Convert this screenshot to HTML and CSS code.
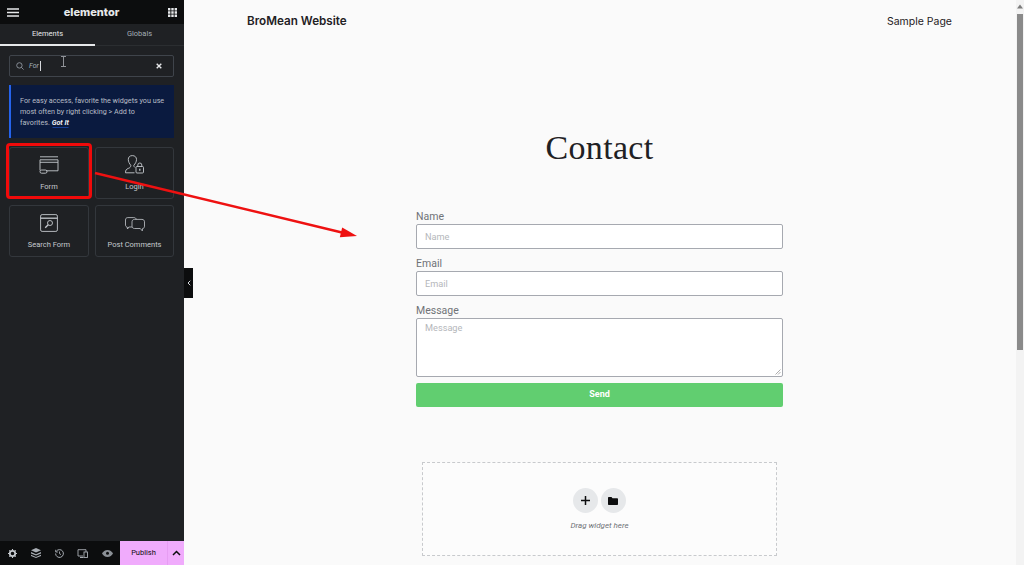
FILE: index.html
```html
<!DOCTYPE html>
<html lang="en">
<head>
    <meta charset="UTF-8">
    <title>Contact - Elementor</title>
    <link rel="stylesheet" href="styles.css">
</head>
<body>
    <div class="editor">
        <aside class="panel">
            <div class="panel-top">
                <svg class="icon-menu" width="12" height="9" viewBox="0 0 12 9"><path d="M0 1h12M0 4.500h12M0 8h12" stroke="#e6e8ea" stroke-width="1.600"/></svg>
                <span class="brand">elementor</span>
                <svg width="9" height="9" viewBox="0 0 9 9" fill="#e6e8ea"><path d="M0 0h2.400v2.400H0zM3.300 0h2.400v2.400H3.300zM6.600 0H9v2.400H6.600zM0 3.300h2.400v2.400H0zM3.300 3.300h2.400v2.400H3.300zM6.600 3.300H9v2.400H6.600zM0 6.600h2.400V9H0zM3.300 6.600h2.400V9H3.300zM6.600 6.600H9V9H6.600z"/></svg>
            </div>
            <div class="tabs">
                <div class="tab active">Elements</div>
                <div class="tab">Globals</div>
            </div>
            <div class="panel-body">
                <div class="search">
                    <svg width="8" height="8" viewBox="0 0 8 8" fill="none" stroke="#9da5ae"><circle cx="3.400" cy="3.400" r="2.700" stroke-width=".8"/><path d="M5.400 5.400L7.600 7.600" stroke-width=".8"/></svg>
                    <div class="search-input"><span class="search-text">For</span></div>
                    <svg class="search-clear" width="6" height="6" viewBox="0 0 6 6"><path d="M.7.7l4.600 4.600M5.300.7L.7 5.300" stroke="#e6e8ea" stroke-width="1.400"/></svg>
                </div>
                <div class="notice">For easy access, favorite the widgets you use most often by right clicking &gt; Add to favorites. <b class="got-it">Got It</b></div>
                <div class="widgets">
                    <div class="widget">
                        <svg width="20" height="18" viewBox="0 0 20 18" fill="none" stroke="#c5c9ce" stroke-width=".9"><path d="M1 .8h18M1 3.800h18v11H7M1 3.800v10.500"/><rect x="1" y="14" width="7" height="3.200" rx="1.600"/><path d="M1 6.300h18"/></svg>
                        <span>Form</span>
                    </div>
                    <div class="widget">
                        <svg width="19" height="19" viewBox="0 0 19 19" fill="none" stroke="#c5c9ce" stroke-width=".9"><path d="M10 12.500c-.8-.6-1.200-1.200-1.200-2.200 1.500-1.700 2.700-3.500 2.700-5.800S10 .6 7.300.6 3.300 2.300 3.300 4.500 4.500 8.800 5.800 10.300c0 1.700-.8 2.400-2.500 3.100C1.300 14.200.5 15 .5 17.800h9"/><rect x="11" y="11.500" width="7.500" height="6.500" rx="1"/><path d="M12.800 11.500V10a2 2 0 0 1 4 0v1.500"/><path d="M14.800 13.800v2" stroke-width="1.300"/></svg>
                        <span>Login</span>
                    </div>
                    <div class="widget">
                        <svg width="18" height="18" viewBox="0 0 18 18" fill="none" stroke="#c5c9ce" stroke-width=".9"><rect x=".6" y=".6" width="16.800" height="16.800" rx="1.500"/><path d="M.6 4.200h16.800" stroke-width="1.300"/><circle cx="10" cy="9" r="2.500"/><path d="M8.200 10.800l-3 3" stroke-width="1.300"/></svg>
                        <span>Search Form</span>
                    </div>
                    <div class="widget">
                        <svg width="20" height="15" viewBox="0 0 20 15" fill="none" stroke="#c5c9ce" stroke-width=".8"><path d="M7 10H3.800L2.500 12l-.3-2C1 9.800.5 9 .5 8V3C.5 1.500 1.300.6 2.800.6h6c1.300 0 2.200.6 2.500 1.700"/><path d="M9.500 2.400h7.500c1.500 0 2.500 1 2.500 2.400v4.400c0 1.300-.6 2.200-1.900 2.300l-.3 2.400-2-2.400H9.500c-1.500 0-2.500-1-2.500-2.400V4.800c0-1.400 1-2.400 2.500-2.400z"/></svg>
                        <span>Post Comments</span>
                    </div>
                </div>
            </div>
            <div class="panel-bottom">
                <div class="tools">
                    <svg width="9" height="9" viewBox="0 0 9 9"><circle cx="4.500" cy="4.500" r="2.700" fill="none" stroke="#c5c9ce" stroke-width="1.800"/><path d="M4.500 0v9M0 4.500h9M1.300 1.300l6.400 6.400M7.700 1.300L1.300 7.700" stroke="#c5c9ce" stroke-width="1.100" stroke-dasharray="1.500 6"/></svg>
                    <svg width="10" height="10" viewBox="0 0 10 10" fill="#a9aeb4"><path d="M5 0l5 2.200-5 2.200L0 2.200zM0 4l5 2.200L10 4v1.400L5 7.600 0 5.400zM0 6.800L5 9l5-2.200V8L5 10 0 8z"/></svg>
                    <svg width="9" height="9" viewBox="0 0 9 9" fill="none" stroke="#a9aeb4"><path d="M1.300 2.300A3.900 3.900 0 1 1 .6 4.500" stroke-width="1"/><path d="M.7 .8v2.200h2.200" stroke-width=".9"/><path d="M4.500 2.500v2.200l1.500.9" stroke-width=".9"/></svg>
                    <svg width="11" height="9" viewBox="0 0 11 9" fill="none" stroke="#a9aeb4" stroke-width=".9"><path d="M6 7H1V.7h8V3"/><rect x="7" y="3" width="3.500" height="5.500"/><path d="M3 8.500h3.500" stroke-width="1.200"/></svg>
                    <svg width="11" height="7" viewBox="0 0 11 7" fill="#8b9096"><path d="M5.500 0C8 0 10 1.800 11 3.500 10 5.200 8 7 5.500 7S1 5.200 0 3.500C1 1.800 3 0 5.500 0z"/><circle cx="5.500" cy="3.300" r="1.500" fill="#0c0d0e"/></svg>
                </div>
                <div class="publish">Publish</div>
                <div class="publish-more">
                    <svg width="9" height="6" viewBox="0 0 9 6" fill="none"><path d="M1 5l3.500-3.500L8 5" stroke="#0c0d0e" stroke-width="1.500"/></svg>
                </div>
            </div>
            <div class="collapse">
                <svg width="4" height="6" viewBox="0 0 4 6" fill="none"><path d="M3.300.7L1 3l2.300 2.300" stroke="#d5d8dc" stroke-width="1"/></svg>
            </div>
        </aside>

        <main class="page">
            <header class="site-header">
                <div class="site-title">BroMean Website</div>
                <nav class="site-nav">Sample Page</nav>
            </header>
            <h1 class="page-title">Contact</h1>
            <form class="contact-form">
                <label>Name</label>
                <div class="field">Name</div>
                <label>Email</label>
                <div class="field">Email</div>
                <label>Message</label>
                <div class="field field-area">
                    Message
                    <svg class="grip" width="6" height="6" viewBox="0 0 6 6"><path d="M.5 5.500l5-5M3 5.500l2.500-2.500" stroke="#8a8a8a" stroke-width=".7"/></svg>
                </div>
                <div class="send">Send</div>
            </form>
            <div class="dropzone">
                <div class="drop-buttons">
                    <div class="drop-btn"><svg width="9" height="9" viewBox="0 0 9 9"><path d="M4.500 0v9M0 4.500h9" stroke="#0c0d0e" stroke-width="1.500"/></svg></div>
                    <div class="drop-btn"><svg width="10" height="8" viewBox="0 0 10 8" fill="#0c0d0e"><path d="M0 1C0 .4.400 0 1 0h2.500l1 1.200H9c.6 0 1 .4 1 1V7c0 .6-.4 1-1 1H1c-.6 0-1-.4-1-1z"/></svg></div>
                </div>
                <div class="drop-hint">Drag widget here</div>
            </div>
        </main>

        <div class="scrollbar">
            <svg width="8" height="5" viewBox="0 0 8 5"><path d="M4 .5L7 4.500H1z" fill="#7c7c7c"/></svg>
            <div class="scroll-thumb"></div>
        </div>
    </div>

    <!-- annotations on top of the screenshot -->
    <div class="highlight"></div>
    <svg class="arrow" width="290" height="100" viewBox="0 0 290 100">
        <path d="M1 1L250 61" stroke="#ee1111" stroke-width="2.500"/>
        <path d="M263 64L245.800 65.200L248.200 55.400z" fill="#ee1111"/>
    </svg>
    <svg class="ibeam" width="7" height="11" viewBox="0 0 7 11" fill="none"><path d="M1 .5h5M1 10.500h5M3.500 .5v10" stroke="#8f9297" stroke-width="1"/></svg>
</body>
</html>
```

FILE: styles.css
```css
* { box-sizing: border-box; }
html, body { margin: 0; height: 100%; overflow: hidden; }
body { font-family: Roboto, "Liberation Sans", sans-serif; background-color: #fafafa; }
.editor { display: flex; height: 565px; }

/* left panel */
.panel { position: relative; width: 184px; flex: none; display: flex; flex-direction: column; background-color: #1f2124; color: #d5d8dc; }
.panel-top { height: 24px; flex: none; display: flex; align-items: center; justify-content: space-between; padding: 0 7px; background-color: #0c0d0e; }
.brand { margin-right: 4px; font-family: Inter, sans-serif; font-size: 11px; font-weight: 800; color: #e6e8ea; }
.tabs { display: flex; height: 22px; flex: none; border-bottom: 1px solid #2b2e31; }
.tab { flex: 1; font-size: 7.5px; line-height: 20px; text-align: center; color: #a4afb7; }
.tab.active { flex: 0 0 95px; height: 22px; color: #e6e8ea; border-bottom: 2px solid #e6e8ea; }
.panel-body { flex: 1; padding: 9px 10px 0 9px; }
.search { height: 22px; display: flex; align-items: center; gap: 5px; padding: 0 6px; border: 1px solid #3f444b; border-radius: 2px; }
.search-input { flex: 1; display: flex; }
.search-text { padding-right: 1px; font-size: 7px; line-height: 10px; font-style: italic; color: #a4afb7; border-right: 1px solid #d5d8dc; }
.search-clear { margin-right: 5px; }
.notice { margin-top: 8px; height: 53px; padding: 10px 9px 0 9px; background-color: #0a1a3f; border-left: 2px solid #2563eb; font-size: 7.2px; line-height: 11px; color: #b8bec6; }
.got-it { font-style: italic; color: #f1f2f3; box-shadow: 0 1px 0 -0.5px #2563eb; }
.widgets { display: grid; grid-template-columns: 80px 79px; grid-auto-rows: 52px; column-gap: 6px; row-gap: 6px; margin-top: 9px; }
.widget { display: flex; flex-direction: column; align-items: center; justify-content: flex-end; gap: 8px; padding-bottom: 6px; border: 1px solid #33373c; border-radius: 3px; font-size: 7.5px; line-height: 10px; color: #c5c9ce; }
.panel-bottom { height: 24px; flex: none; display: flex; align-items: center; background-color: #0c0d0e; }
.tools { width: 120px; display: flex; align-items: center; justify-content: space-between; padding: 0 7px 0 8px; }
.publish { width: 47px; height: 24px; line-height: 24px; text-align: center; font-size: 7.5px; color: #0c0d0e; background-color: #f0abfc; }
.publish-more { width: 17px; height: 24px; display: flex; align-items: center; justify-content: center; background-color: #f0abfc; border-left: 1px solid #e79df3; }
.collapse { position: absolute; right: -9px; top: 268px; width: 9px; height: 30px; display: flex; align-items: center; justify-content: center; background-color: #0c0d0e; }

/* page preview */
.page { flex: 1; display: flex; flex-direction: column; align-items: center; padding-right: 1px; background-color: #fafafa; color: #1f2124; }
.site-header { width: 705px; display: flex; justify-content: space-between; padding-top: 14px; font-family: Inter, sans-serif; font-size: 10.5px; line-height: 14px; }
.site-title { font-weight: 600; font-size: 11.7px; }
.site-nav { padding-top: 1px; }
.page-title { margin: 99px 0 0; font-family: "Liberation Serif", serif; font-size: 34px; font-weight: 400; line-height: 40px; letter-spacing: 0.3px; }
.contact-form { width: 367px; margin-top: 41px; display: flex; flex-direction: column; }
.contact-form label { height: 15px; font-size: 10.5px; line-height: 15px; color: #6f7277; }
.field { position: relative; height: 25px; margin-bottom: 7px; padding: 0 8px; background-color: #fff; border: 1px solid #a6a9b0; border-radius: 2px; font-size: 9.2px; line-height: 23px; color: #b5b7bb; }
.field-area { height: 59px; margin-bottom: 6px; line-height: 18px; }
.grip { position: absolute; right: 1px; bottom: 1px; }
.send { height: 24px; line-height: 23px; text-align: center; font-size: 9px; font-weight: 700; color: #fff; background-color: #61ce70; border-radius: 2px; }
.dropzone { width: 355px; height: 94px; margin-top: 55px; display: flex; flex-direction: column; align-items: center; padding-top: 25px; background-color: #fcfcfc; border: 1px dashed #c8cacd; }
.drop-buttons { display: flex; gap: 3px; margin-right: 1px; }
.drop-btn { width: 25px; height: 25px; display: flex; align-items: center; justify-content: center; border-radius: 50%; background-color: #e6e8ea; }
.drop-hint { margin-top: 8px; font-size: 8px; font-style: italic; color: #6f7277; }

.scrollbar { width: 8px; flex: none; display: flex; flex-direction: column; align-items: center; padding-top: 4px; background-color: #f3f3f3; }
.scroll-thumb { width: 6px; height: 336px; margin-top: 5px; background-color: #8a8a8a; }

/* annotations */
.highlight { position: absolute; left: 6px; top: 143px; width: 86px; height: 56px; border: 3px solid #f00a0a; border-radius: 4px; }
.arrow { position: absolute; left: 94px; top: 172px; }
.ibeam { position: absolute; left: 60px; top: 56px; }
```
